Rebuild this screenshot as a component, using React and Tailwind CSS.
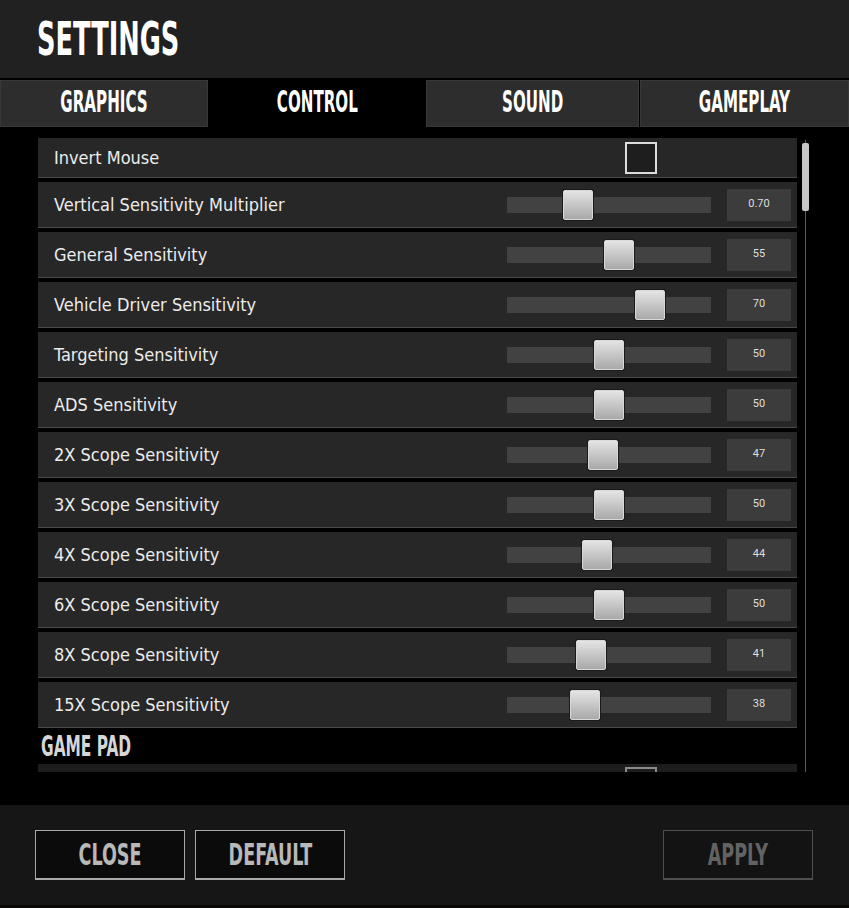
import React from "react";

const rows = [
  { label: "Vertical Sensitivity Multiplier", value: "0.70", pos: 0.348 },
  { label: "General Sensitivity", value: "55", pos: 0.55 },
  { label: "Vehicle Driver Sensitivity", value: "70", pos: 0.7 },
  { label: "Targeting Sensitivity", value: "50", pos: 0.5 },
  { label: "ADS Sensitivity", value: "50", pos: 0.5 },
  { label: "2X Scope Sensitivity", value: "47", pos: 0.47 },
  { label: "3X Scope Sensitivity", value: "50", pos: 0.5 },
  { label: "4X Scope Sensitivity", value: "44", pos: 0.44 },
  { label: "6X Scope Sensitivity", value: "50", pos: 0.5 },
  { label: "8X Scope Sensitivity", value: "41", pos: 0.41 },
  { label: "15X Scope Sensitivity", value: "38", pos: 0.38 },
];

const tabs = [
  { name: "GRAPHICS", w: "w-[208px]", active: false },
  { name: "CONTROL", w: "w-[216px]", active: true },
  { name: "SOUND", w: "w-[213px]", active: false },
  { name: "GAMEPLAY", w: "flex-1", active: false },
];

// condensed display face: DejaVu Sans Condensed bold squeezed horizontally
const headFont = "font-['DejaVu_Sans_Condensed','DejaVu_Sans',sans-serif] font-bold";
const labelFont = "font-['DejaVu_Sans_Condensed','DejaVu_Sans',sans-serif]";

function Slider({ pos }) {
  return (
    <div className="relative w-[204px] h-[16px] bg-[#424242]">
      <div
        className="absolute top-[-7px] w-[30px] h-[30px] rounded-[2px] border border-[#d8d8d8] bg-gradient-to-b from-[#e4e4e4] to-[#a9a9a9] shadow-[0_0_0_1px_#1a1a1a]"
        style={{ left: Math.round(pos * 204) - 15 }}
      />
    </div>
  );
}

function Row({ label, value, pos }) {
  return (
    <div className="flex items-center h-[46px] mt-[4px] bg-[#272727] border-b border-[#4a4a4a] pl-[16px] pr-[6px]">
      <span className={`flex-1 text-[18px] text-[#ececec] ${labelFont}`}>{label}</span>
      <Slider pos={pos} />
      <div className="ml-[16px] w-[64px] h-[32px] bg-[#3c3c3c] flex items-center justify-center text-[11px] text-[#dedede] font-['Roboto',sans-serif]">
        {value}
      </div>
    </div>
  );
}

function FooterButton({ children, dim, className = "" }) {
  return (
    <button
      className={`w-[150px] h-[50px] border border-b-2 flex items-center justify-center ${
        dim ? "border-[#4f4f4f] bg-[#131313] text-[#626262]" : "border-[#a9a9a9] bg-[#0b0b0b] text-[#b8b8b8]"
      } ${className}`}
    >
      <span className={`inline-block text-[31px] leading-none scale-x-[0.63] ${headFont}`}>{children}</span>
    </button>
  );
}

export default function App() {
  return (
    <div className="w-[849px] h-[908px] bg-black flex flex-col overflow-hidden">
      {/* header */}
      <div className="h-[78px] bg-[#212121] flex items-center pl-[37px]">
        <h1 className={`inline-block origin-left scale-x-[0.62] text-[46px] leading-none text-white ${headFont}`}>
          SETTINGS
        </h1>
      </div>

      {/* tabs */}
      <div className="flex h-[49px] pt-[2px] bg-black gap-[1px]">
        {tabs.map((t) => (
          <div
            key={t.name}
            className={`${t.w} h-[47px] flex items-center justify-center pb-[4px] ${
              t.active ? "bg-black" : "bg-[#2d2d2d] border border-[#383838]"
            }`}
          >
            <span className={`inline-block scale-x-[0.56] text-[30px] leading-none text-white ${headFont}`}>{t.name}</span>
          </div>
        ))}
      </div>

      {/* list */}
      <div className="h-[678px] flex pt-[11px]">
        <div className="ml-[38px] w-[759px] h-[634px] overflow-hidden">
          <div className="flex items-center h-[40px] bg-[#272727] border-b border-[#4a4a4a] pl-[16px]">
            <span className={`flex-1 text-[18px] text-[#ececec] ${labelFont}`}>Invert Mouse</span>
            <div className="mr-[140px] w-[32px] h-[32px] border-2 border-[#dcdcdc] bg-[#1e1e1e]" />
          </div>
          {rows.map((r) => (
            <Row key={r.label} {...r} />
          ))}
          <div className="h-[36px] flex items-center pl-[3px]">
            <span className={`inline-block origin-left scale-x-[0.59] text-[29px] leading-none text-[#d6d6d6] ${headFont}`}>
              GAME PAD
            </span>
          </div>
          <div className="flex items-start h-[46px] bg-gradient-to-b from-[#1c1c1c] to-[#272727] border-b border-[#4a4a4a] pl-[16px] pt-[3px]">
            <div className="ml-auto mr-[140px] w-[32px] h-[32px] border-2 border-[#8a8a8a] bg-[#1e1e1e]" />
          </div>
        </div>
        {/* scrollbar */}
        <div className="relative ml-[5px] w-[7px] h-[634px]">
          <div className="absolute left-[3px] top-[2px] bottom-0 w-px bg-[#5a5a5a]" />
          <div className="absolute left-0 top-[5px] w-[7px] h-[68px] rounded-[2px] bg-[#c6c6c6]" />
        </div>
      </div>

      {/* footer */}
      <div className="h-[100px] bg-[#161616] flex items-start pt-[25px] pl-[35px] pr-[36px]">
        <FooterButton>CLOSE</FooterButton>
        <FooterButton className="ml-[10px]">DEFAULT</FooterButton>
        <FooterButton dim className="ml-auto">APPLY</FooterButton>
      </div>
      <div className="flex-1 bg-[#0a0806]" />
    </div>
  );
}
